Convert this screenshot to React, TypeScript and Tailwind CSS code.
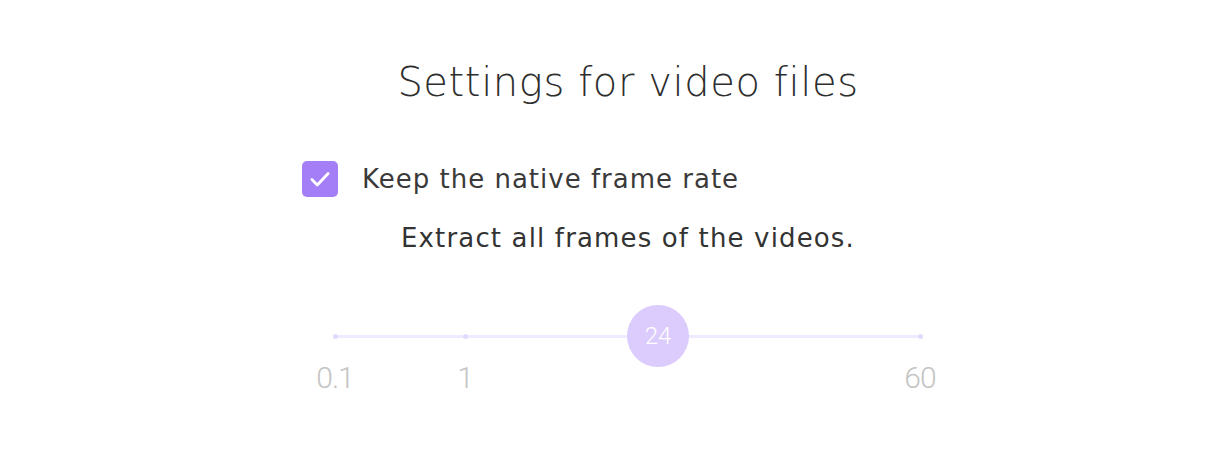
import { useState } from 'react';

const ticks = [
  { label: '0.1', pos: 0 },
  { label: '1', pos: 130 },
  { label: '60', pos: 585 },
];

export default function App() {
  const [keepNative, setKeepNative] = useState(true);
  const value = 24;
  const thumbPos = 323; // px from the left of the track

  return (
    <div className="w-[1232px] h-[474px] bg-white pl-6 pt-[58px] font-['DejaVu_Sans',sans-serif] text-[#2e2e2e]">
      <div className="flex flex-col items-center">
        <h1 className="text-[40px] leading-[48px] font-extralight tracking-[0.6px]">Settings for video files</h1>

        <div className="w-[652px] mt-[55px] flex items-center">
          <button
            onClick={() => setKeepNative(!keepNative)}
            className={`w-9 h-9 rounded-[5px] flex items-center justify-center ${keepNative ? 'bg-[#a47ef6]' : 'bg-white border-2 border-[#a47ef6]'}`}
          >
            {keepNative && (
              <svg className="w-[26px] h-[26px]" viewBox="0 0 24 24" fill="none" stroke="white" strokeWidth={2.6} strokeLinecap="round" strokeLinejoin="round">
                <path d="M4.5 12.5l5 5L19.5 7" />
              </svg>
            )}
          </button>
          <span className="ml-6 text-[26px] leading-[30px] tracking-[1px] text-[#3a3a3a]">Keep the native frame rate</span>
        </div>

        <p className="mt-[26px] text-[26px] leading-[30px] tracking-[1.15px] text-[#333]">Extract all frames of the videos.</p>

        <div className="relative w-[586px] h-[100px] mt-[38px]">
          <div className="absolute left-0 right-0 top-[44px] h-[3px] rounded-full bg-[#efeaff]" />
          {ticks.map((t) => (
            <div key={t.label}>
              <div className="absolute top-[43px] w-[5px] h-[5px] rounded-full bg-[#e2dafc]" style={{ left: t.pos - 2 }} />
              <span
                className="absolute top-[71px] -translate-x-1/2 font-['Roboto',sans-serif] text-[30px] leading-[32px] font-light tracking-[-1px] text-[#c4c4c4]"
                style={{ left: t.pos }}
              >
                {t.label}
              </span>
            </div>
          ))}
          <div
            className="absolute top-[14px] w-[62px] h-[62px] -translate-x-1/2 rounded-full bg-[#dccbfd] flex items-center justify-center"
            style={{ left: thumbPos }}
          >
            <span className="text-white font-['Roboto',sans-serif] text-[24px] leading-none font-light">{value}</span>
          </div>
        </div>
      </div>
    </div>
  );
}
